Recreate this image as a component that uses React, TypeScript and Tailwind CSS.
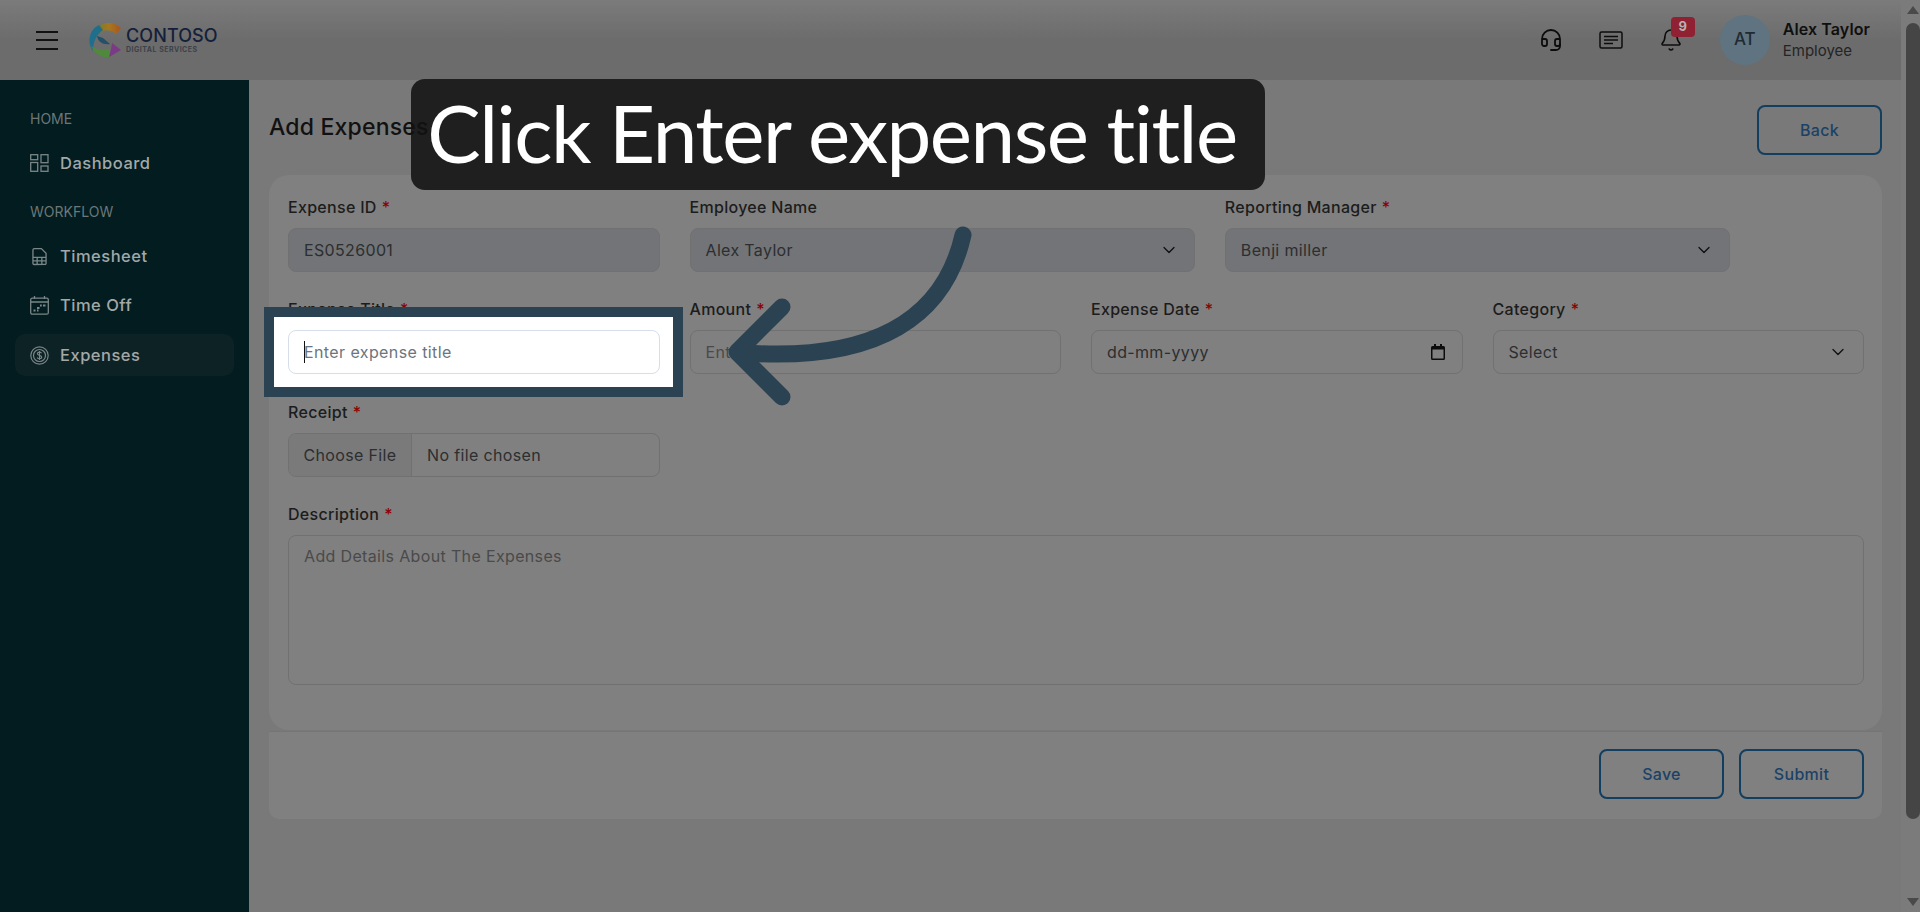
import React from "react";
import { Bell, ChevronDown, Headset } from "lucide-react";

// sidebar icons are drawn by hand, the icon packs have nothing close enough
const DashIcon = () => (
  <svg width="19" height="18" viewBox="0 0 19 18" fill="none" stroke="currentColor" strokeWidth="1.3">
    <rect x="0.7" y="0.7" width="7" height="5" />
    <rect x="11" y="0.7" width="7" height="8" />
    <rect x="0.7" y="8.5" width="7" height="8.800" />
    <rect x="11" y="12" width="7" height="5.300" />
  </svg>
);

const SheetIcon = () => (
  <svg width="15" height="19" viewBox="0 0 16 19" fill="none" stroke="currentColor" strokeWidth="1.4">
    <path d="M1 17V2.500A1.500 1.500 0 0 1 2.500 1H10l5 5v11a1.200 1.200 0 0 1-1.200 1H2.200A1.200 1.200 0 0 1 1 17Z" />
    <path d="M1 10.500h14M1 14.200h14M5.500 10.500V18M10.500 10.500V18" />
  </svg>
);

const CalIcon = () => (
  <svg width="19" height="19" viewBox="0 0 19 19" fill="none" stroke="currentColor" strokeWidth="1.3">
    <rect x="0.7" y="2.200" width="17.600" height="16" rx="1.500" />
    <path d="M4.500 0v3M14.500 0v3M0.700 6h17.600" />
    <path d="M10 9.500h1.800M13 9.500h2.500M7 12h2.500M3.500 14.500h2M7 14.500h1.500" strokeWidth="1.800" />
  </svg>
);

const CoinIcon = () => (
  <svg width="19" height="19" viewBox="0 0 19 19" fill="none" stroke="currentColor" strokeWidth="1.200">
    <circle cx="9.500" cy="9.500" r="8.700" />
    <circle cx="9.500" cy="9.500" r="6" />
    <path d="M11.600 7.300c-.4-.9-1.200-1.200-2.100-1.200-1.200 0-2.100.6-2.100 1.600 0 2.200 4.300 1.100 4.300 3.400 0 1-1 1.700-2.200 1.700-1 0-1.900-.4-2.300-1.300M9.500 5v9" strokeWidth="1.100" />
  </svg>
);

const Logo = () => (
  <svg width="34" height="36" viewBox="0 0 34 36">
    <defs>
      <linearGradient id="top" x1="0" y1="0" x2="1" y2="0">
        <stop offset="0" stopColor="#6f7d35" />
        <stop offset="0.5" stopColor="#a8781c" />
        <stop offset="1" stopColor="#a8551f" />
      </linearGradient>
    </defs>
    <path d="M9 6C14 0 26-1 33 6l-5 6c-5-5-13-5-17 0Z" fill="url(#top)" />
    <path d="M11 3C2 7-2 20 5 29c0-9 3-16 10-21Z" fill="#1f6f8c" />
    <path d="M3 24c4 8 11 12 19 11v-8c-7 2-14 1-19-3Z" fill="#4f8a3c" />
    <path d="M21 35l12-7-9-7-1 6Z" fill="#7b3a85" />
    <path d="M9 14c1 6 6 9 13 8l-7-6Z" fill="#23506a" />
  </svg>
);

const Section = ({ children }: { children: React.ReactNode }) => (
  <div className="px-[30px] text-[14px] leading-5 text-[#6b7779]">{children}</div>
);

const NavItem = ({ icon, label, active }: { icon: React.ReactNode; label: string; active?: boolean }) => (
  <div className={`mx-[15px] flex h-[42px] items-center gap-[11px] rounded-[10px] px-[15px] text-[16.500px] font-medium tracking-[0.5px] text-[#a3a8a8] ${active ? "bg-[#0c2225]" : ""}`}>
    <span className="flex w-[19px] justify-center text-[#7a8688]">{icon}</span>
    {label}
  </div>
);

const Label = ({ text, req }: { text: string; req?: boolean }) => (
  <div className="mb-[10px] h-[22px] text-[16px] leading-[22px] font-medium tracking-[0.3px] text-[#1c1c1c]">
    {text}
    {req && <span className="ml-[5px] text-[#8b0000]">*</span>}
  </div>
);

const Box = ({ children, grey, className = "" }: { children: React.ReactNode; grey?: boolean; className?: string }) => (
  <div className={`flex h-[43.500px] items-center justify-between rounded-[8px] border border-[#717171] px-[15px] text-[16px] tracking-[0.35px] text-[#2c2e30] ${grey ? "bg-[#727477]" : ""} ${className}`}>
    {children}
  </div>
);

const OutlineBtn = ({ label }: { label: string }) => (
  <button type="button" className="h-[50px] w-[125px] rounded-[8px] border-2 border-[#123e60] text-[16px] font-medium tracking-[0.3px] text-[#1b4266]">
    {label}
  </button>
);

const App = () => {
  return (
    <div className="relative flex h-screen w-full overflow-hidden bg-[#797979] font-['Inter',sans-serif]">
      <div className="flex min-w-0 flex-1 flex-col">
        <header className="flex h-20 shrink-0 items-center bg-gradient-to-b from-[#7b7b7b] via-[#6c6c6c] to-[#6c6c6c] pr-[31px]">
          <div className="ml-9 flex w-[22px] flex-col gap-[6.500px]">
            <span className="h-[2px] bg-[#111]" />
            <span className="h-[2px] bg-[#111]" />
            <span className="h-[2px] bg-[#111]" />
          </div>
          <div className="ml-[30px] flex items-center gap-[4px]">
            <Logo />
            <div className="flex flex-col">
              <span className="text-[18px] leading-[19px] font-medium tracking-[0.1px] text-[#14203a]">CONTOSO</span>
              <span className="text-[7px] leading-[9px] font-bold tracking-[0.5px] text-[#3d4148]">DIGITAL SERVICES</span>
            </div>
          </div>
          <div className="ml-auto flex items-center">
            <Headset size={24} strokeWidth={1.800} className="text-[#0c0c0c]" />
            <svg className="ml-[36px]" width="24" height="18" viewBox="0 0 24 18" fill="none" stroke="#0c0c0c" strokeWidth="1.500">
              <rect x="1" y="1" width="22" height="16" rx="1.500" />
              <path d="M5 5.500h14M5 9h14M5 12.500h9" />
            </svg>
            <div className="relative ml-[36px]">
              <Bell size={24} strokeWidth={1.600} className="text-[#0c0c0c]" />
              <span className="absolute -top-[11px] left-[12px] flex h-5 w-6 items-center justify-center rounded-[4px] bg-[#8f2133] text-[13px] font-bold text-[#b9b0b0]">
                9
              </span>
            </div>
            <div className="ml-[37px] flex h-[50px] w-[50px] items-center justify-center rounded-full bg-[#5f7480] text-[17px] font-medium text-[#1f2a33]">
              AT
            </div>
            <div className="ml-[13px] flex flex-col">
              <span className="text-[16px] leading-[22px] font-semibold tracking-[0.1px] text-[#0f0f0f]">Alex Taylor</span>
              <span className="text-[15px] leading-[22px] text-[#242424]">Employee</span>
            </div>
          </div>
        </header>

        <div className="flex min-h-0 flex-1">
          <aside className="flex w-[249px] shrink-0 flex-col bg-[#021c1f] pt-[29px]">
            <Section>HOME</Section>
            <div className="mt-[13px]">
              <NavItem icon={<DashIcon />} label="Dashboard" />
            </div>
            <div className="mt-[18px]">
              <Section>WORKFLOW</Section>
            </div>
            <div className="mt-[13px] flex flex-col gap-[7px]">
              <NavItem icon={<SheetIcon />} label="Timesheet" />
              <NavItem icon={<CalIcon />} label="Time Off" />
              <div className="mt-px">
                <NavItem icon={<CoinIcon />} label="Expenses" active />
              </div>
            </div>
          </aside>

          <main className="min-w-0 flex-1 pt-[25px] pr-[19px] pl-5">
            <div className="mb-5 flex h-[50px] items-center justify-between">
              <h1 className="relative z-40 mb-[6px] text-[23px] font-medium tracking-[0.2px] text-[#111]">Add Expenses</h1>
              <OutlineBtn label="Back" />
            </div>

            <div className="h-[555px] rounded-[20px] bg-[#808080] pt-[21px] pr-[18px] pb-[44px] pl-[19px]">
              <div className="grid grid-cols-12 gap-x-[30px] gap-y-[26.500px]">
                <div className="col-span-3">
                  <Label text="Expense ID" req />
                  <Box grey>ES0526001</Box>
                </div>
                <div className="col-span-4">
                  <Label text="Employee Name" />
                  <Box grey>
                    Alex Taylor
                    <ChevronDown size={20} strokeWidth={1.600} className="text-[#111]" />
                  </Box>
                </div>
                <div className="col-span-4">
                  <Label text="Reporting Manager" req />
                  <Box grey>
                    Benji miller
                    <ChevronDown size={20} strokeWidth={1.600} className="text-[#111]" />
                  </Box>
                </div>
                <div className="col-span-1" />

                <div className="col-span-3">
                  <Label text="Expense Title" req />
                  <div className="relative">
                    {/* highlight frame of the walkthrough step */}
                    <div className="absolute -top-[23px] -right-[23px] -bottom-[23px] -left-[24px] z-10 border-[10px] border-[#2a4252] bg-white" />
                    <div className="relative z-20 flex h-[43.500px] items-center rounded-[8px] border border-[#d6deea] bg-white px-[15px] text-[16px] tracking-[0.4px] text-[#6c757d]">
                      <span className="absolute left-[15px] h-[22px] w-px bg-[#111]" />
                      Enter expense title
                    </div>
                  </div>
                </div>
                <div className="col-span-3">
                  <Label text="Amount" req />
                  <Box className="text-[#4a4a4a]">Enter amount</Box>
                </div>
                <div className="col-span-3">
                  <Label text="Expense Date" req />
                  <Box>
                    dd-mm-yyyy
                    <svg width="14" height="16" viewBox="0 0 14 16" className="mr-[2px]">
                      <path d="M3 0h2v2h4V0h2v2h1.500A1.500 1.500 0 0 1 14 3.500v11a1.500 1.500 0 0 1-1.500 1.500h-11A1.500 1.500 0 0 1 0 14.500v-11A1.500 1.500 0 0 1 1.500 2H3Zm-1.500 5.500v9h11v-9Z" fill="#0c0c0c" />
                    </svg>
                  </Box>
                </div>
                <div className="col-span-3">
                  <Label text="Category" req />
                  <Box>
                    Select
                    <ChevronDown size={20} strokeWidth={1.600} className="text-[#111]" />
                  </Box>
                </div>

                <div className="col-span-3 mt-px">
                  <Label text="Receipt" req />
                  <div className="flex h-[43.500px] items-center overflow-hidden rounded-[8px] border border-[#717171] text-[16px] tracking-[0.35px] text-[#2c2e30]">
                    <span className="flex h-full w-[123px] items-center justify-center border-r border-[#717171] bg-[#7a7a7a]">Choose File</span>
                    <span className="pl-[15px]">No file chosen</span>
                  </div>
                </div>
                <div className="col-span-9" />

                <div className="col-span-12">
                  <Label text="Description" req />
                  <div className="h-[150px] rounded-[8px] border border-[#717171] px-[15px] py-[8px] text-[16px] tracking-[0.35px] text-[#4a4a4a]">
                    Add Details About The Expenses
                  </div>
                </div>
              </div>
            </div>

            <div className="mt-px flex h-[88px] justify-end gap-[15px] rounded-b-[10px] border-t border-[#757575] bg-[#808080] pt-[17px] pr-[18px]">
              <OutlineBtn label="Save" />
              <OutlineBtn label="Submit" />
            </div>
          </main>
        </div>
      </div>

      {/* browser scrollbar */}
      <div className="flex w-[19px] shrink-0 flex-col items-center bg-[#7b7b7b] pl-[4px]">
        <span className="mt-[6px] h-0 w-0 border-x-[6px] border-b-[8px] border-x-transparent border-b-[#4a4a4a]" />
        <span className="mt-[9px] h-[796px] w-[14px] rounded-[7px] bg-[#454545]" />
        <span className="mt-auto mb-[6px] h-0 w-0 border-x-[6px] border-t-[8px] border-x-transparent border-t-[#4a4a4a]" />
      </div>

      {/* step callout and arrow lie over the page */}
      <div className="absolute top-[79px] left-[411px] z-30 flex h-[111px] w-[854px] items-center justify-center rounded-[14px] bg-[#1f1f1f] pr-[12px] pb-[6px] font-['Lato',sans-serif] text-[80px] leading-none font-normal tracking-[-1.500px] whitespace-nowrap text-white">
        Click Enter expense title
      </div>
      <svg className="absolute top-0 left-0 z-30" width="1920" height="912" viewBox="0 0 1920 912" fill="none" stroke="#2a4252" strokeWidth="17" strokeLinecap="round" strokeLinejoin="round">
        <path d="M963 235C945 315 880 362 745 353" />
        <path d="M782 307L737 352L782 397" />
      </svg>
    </div>
  );
};

export default App;
